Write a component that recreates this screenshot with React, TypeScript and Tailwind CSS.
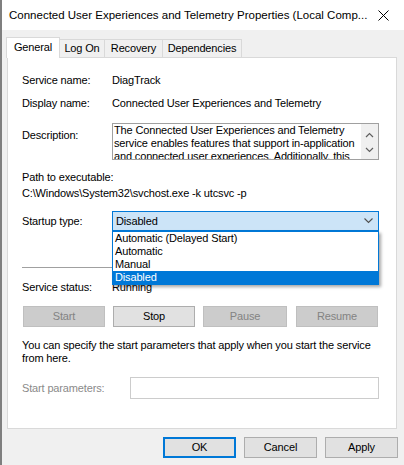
import React from "react";

function ScrollArrow({ up }: { up?: boolean }) {
  return (
    <svg width="9" height="6" viewBox="0 0 9 6" className="block">
      <path d={up ? "M1 5 L4.5 1.5 L8 5" : "M1 1 L4.5 4.5 L8 1"} fill="none" stroke="#606060" strokeWidth="1.2" />
    </svg>
  );
}

function Btn({ label, disabled, className = "" }: { label: string; disabled?: boolean; className?: string }) {
  return (
    <div
      className={
        "h-[21px] flex items-center justify-center border " +
        (disabled ? "bg-[#cccccc] border-[#bfbfbf] text-[#838383] " : "bg-[#e1e1e1] border-[#adadad] text-black ") +
        className
      }
    >
      {label}
    </div>
  );
}

export default function App() {
  const options = ["Automatic (Delayed Start)", "Automatic", "Manual", "Disabled"];
  return (
    <div className="w-[404px] h-[465px] flex bg-[#f0f0f0] overflow-hidden text-[11px] leading-[13px] tracking-[-0.15px] text-black font-['Liberation_Sans',Arial,sans-serif]">
      <div className="w-[2px] bg-[#7f7f7f] shrink-0" />
      <div className="flex-1 flex flex-col">
        {/* title bar */}
        <div className="h-[30px] bg-white flex items-center pl-[7px] shrink-0">
          <span className="text-[11.5px] tracking-normal whitespace-nowrap">Connected User Experiences and Telemetry Properties (Local Comp...</span>
          <svg width="11" height="11" viewBox="0 0 11 11" className="ml-auto mr-[15px] block">
            <path d="M0.5 0.5 L10.5 10.5 M10.5 0.5 L0.5 10.5" stroke="#000" strokeWidth="1" />
          </svg>
        </div>

        {/* tabs */}
        <div className="flex items-end h-[20px] mt-[7px] ml-[4px]">
          <div className="relative z-10 w-[54px] h-[21px] -mb-px bg-white border border-b-0 border-[#d9d9d9] flex items-center justify-center pb-[2px]">
            General
          </div>
          <div className="-ml-px w-[46px] h-[18px] border border-b-0 border-[#d9d9d9] flex items-center justify-center">Log On</div>
          <div className="-ml-px w-[59px] h-[18px] border border-b-0 border-[#d9d9d9] flex items-center justify-center">Recovery</div>
          <div className="-ml-px w-[80px] h-[18px] border border-b-0 border-[#d9d9d9] flex items-center justify-center">Dependencies</div>
        </div>

        {/* panel */}
        <div className="ml-[5px] w-[390px] h-[372px] bg-white border border-[#d9d9d9] flex flex-col pl-[14px] shrink-0">
          <div className="flex mt-[16px]">
            <div className="w-[90px]">Service name:</div>
            <div>DiagTrack</div>
          </div>
          <div className="flex mt-[10px]">
            <div className="w-[90px]">Display name:</div>
            <div>Connected User Experiences and Telemetry</div>
          </div>
          <div className="flex mt-[13px]">
            <div className="w-[90px] mt-[6px]">Description:</div>
            <div className="w-[267px] h-[37px] border border-[#a0a0a0] flex overflow-hidden">
              <div className="flex-1 pl-[1px] pr-[1px]">
                The Connected User Experiences and Telemetry service enables features that support in-application and connected user experiences. Additionally, this
              </div>
              <div className="w-[17px] bg-[#f0f0f0] flex flex-col items-center pt-[8px] gap-[9px] shrink-0">
                <ScrollArrow up />
                <ScrollArrow />
              </div>
            </div>
          </div>
          <div className="mt-[11px]">Path to executable:</div>
          <div className="mt-[3px]">C:\Windows\System32\svchost.exe -k utcsvc -p</div>
          <div className="flex items-center mt-[11px]">
            <div className="w-[90px]">Startup type:</div>
            <div className="relative w-[267px] h-[20px] bg-[#cce4f7] border border-[#0078d7] flex items-center pl-[3px]">
              <span>Disabled</span>
              <svg width="9" height="6" viewBox="0 0 9 6" className="ml-auto mr-[5px] block">
                <path d="M0.5 0.5 L4.5 4.5 L8.5 0.5" fill="none" stroke="#505050" strokeWidth="1.1" />
              </svg>
              <div className="absolute z-20 left-[-1px] top-[19px] w-[267px] bg-white border border-[#0078d7] shadow-[2px_2px_3px_rgba(0,0,0,0.35)]">
                {options.map((o) => (
                  <div
                    key={o}
                    className={"h-[13px] pl-[2px] " + (o === "Disabled" ? "bg-[#0078d7] text-white" : "")}
                  >
                    {o}
                  </div>
                ))}
              </div>
            </div>
          </div>
          <div className="mt-[36px] h-px w-[356px] bg-[#a0a0a0]" />
          <div className="flex mt-[13px]">
            <div className="w-[90px]">Service status:</div>
            <div>Running</div>
          </div>
          <div className="flex mt-[12px] ml-[1px]">
            <Btn label="Start" disabled className="w-[82px]" />
            <Btn label="Stop" className="w-[82px] ml-[8px]" />
            <Btn label="Pause" disabled className="w-[84px] ml-[8px]" />
            <Btn label="Resume" disabled className="w-[82px] ml-[9px]" />
          </div>
          <div className="mt-[12px] w-[360px]">
            You can specify the start parameters that apply when you start the service from here.
          </div>
          <div className="flex items-center mt-[12px]">
            <div className="w-[108px] text-[#8a8a8a]">Start parameters:</div>
            <div className="w-[249px] h-[22px] border border-[#cccccc] bg-white" />
          </div>
        </div>

        {/* bottom buttons */}
        <div className="flex justify-end mt-[8px] pr-[6px]">
          <div className="w-[73px] h-[21px] bg-[#e1e1e1] border-2 border-[#0078d7] flex items-center justify-center">OK</div>
          <Btn label="Cancel" className="w-[73px] ml-[8px]" />
          <Btn label="Apply" className="w-[73px] ml-[8px]" />
        </div>
      </div>
    </div>
  );
}
